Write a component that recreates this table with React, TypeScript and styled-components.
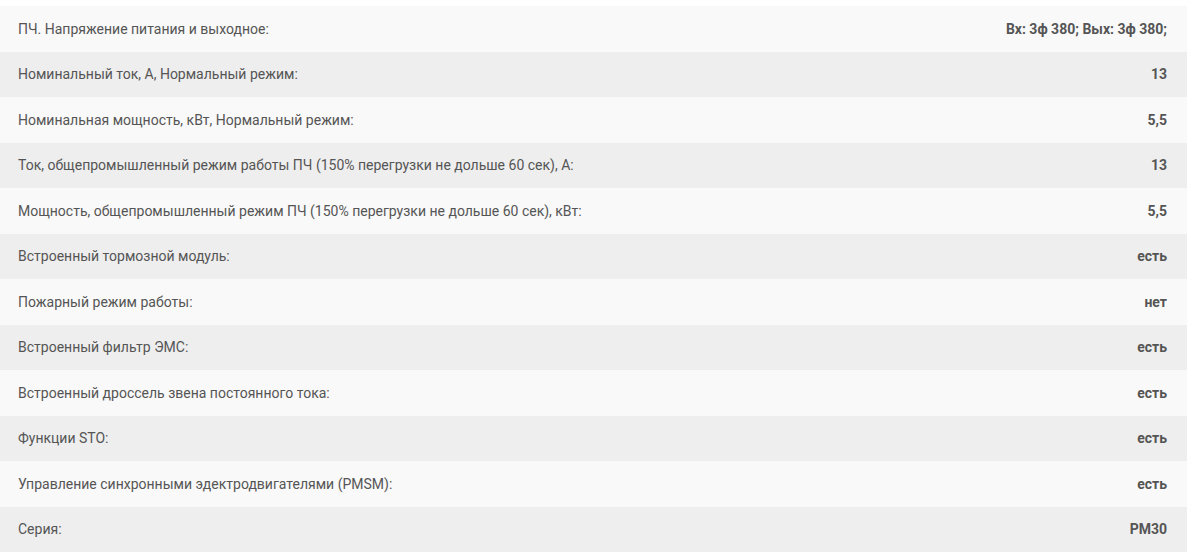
import React from "react";
import styled, { createGlobalStyle } from "styled-components";

const Global = createGlobalStyle`
  html, body { margin: 0; padding: 0; background: #fff; }
  body { font-family: Roboto, "Liberation Sans", Arial, sans-serif; }
`;

const Table = styled.div`
  display: flex;
  flex-direction: column;
  padding-top: 6px;
  width: 1187px;
`;

const Row = styled.div<{ $alt: boolean }>`
  display: flex;
  justify-content: space-between;
  align-items: center;
  height: 45.5px;
  padding: 0 20px 0 18px;
  box-sizing: border-box;
  background: ${(p) => (p.$alt ? "#eeeeee" : "#f9f9f9")};
  font-size: 14px;
  color: #555;
`;

const Label = styled.span`
  font-weight: 400;
`;

const Value = styled.span`
  font-weight: 700;
`;

const rows: [string, string][] = [
  ["ПЧ. Напряжение питания и выходное:", "Вх: 3ф 380; Вых: 3ф 380;"],
  ["Номинальный ток, А, Нормальный режим:", "13"],
  ["Номинальная мощность, кВт, Нормальный режим:", "5,5"],
  ["Ток, общепромышленный режим работы ПЧ (150% перегрузки не дольше 60 сек), А:", "13"],
  ["Мощность, общепромышленный режим ПЧ (150% перегрузки не дольше 60 сек), кВт:", "5,5"],
  ["Встроенный тормозной модуль:", "есть"],
  ["Пожарный режим работы:", "нет"],
  ["Встроенный фильтр ЭМС:", "есть"],
  ["Встроенный дроссель звена постоянного тока:", "есть"],
  ["Функции STO:", "есть"],
  ["Управление синхронными эдектродвигателями (PMSM):", "есть"],
  ["Серия:", "PM30"],
];

export default function App() {
  return (
    <>
      <Global />
      <Table>
        {rows.map(([l, v], i) => (
          <Row key={i} $alt={i % 2 === 1}>
            <Label>{l}</Label>
            <Value>{v}</Value>
          </Row>
        ))}
      </Table>
    </>
  );
}
